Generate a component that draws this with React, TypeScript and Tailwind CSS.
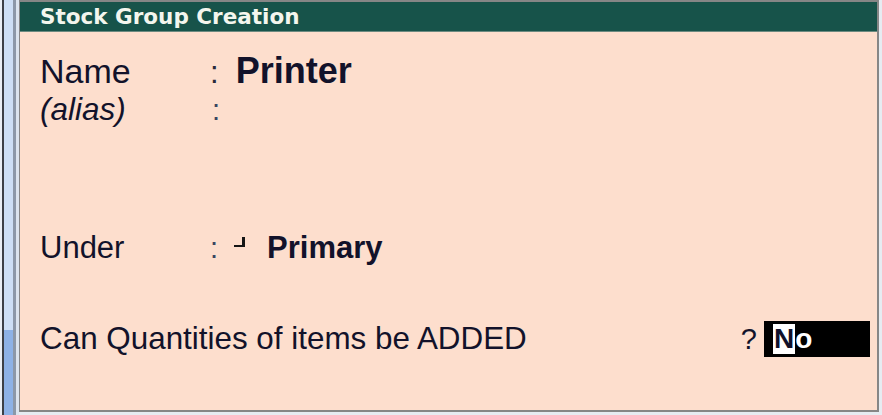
import React from 'react';

export default function App() {
    return (
        <div className="flex h-[415px] w-[882px] overflow-hidden bg-[#e6ecf2] font-['Liberation_Sans',Arial,sans-serif]">
            {/* window edge strip on the left */}
            <div className="flex h-full w-[19px] shrink-0">
                <div className="w-[2px] bg-[#e9eef4]" />
                <div className="w-[2px] bg-[#3c4046]" />
                <div className="flex w-[9px] flex-col">
                    <div className="h-[330px] bg-[#cddff5]" />
                    <div className="flex-1 bg-[#8db2e6]" />
                </div>
                <div className="w-[3px] bg-[#8c98a8]" />
                <div className="w-[3px] bg-[#dbe4ee]" />
            </div>

            <div className="mr-[3px] flex h-[412px] flex-1 flex-col border-t-2 border-r-2 border-b-2 border-l border-[#868686]">
                <div className="flex h-[30px] items-center border-b border-[#6c8a80] bg-[#17534a] pl-[20px]">
                    <h1 className="font-['DejaVu_Sans',Verdana,sans-serif] text-[21.5px] font-bold leading-none text-[#f4f6ee]">
                        Stock Group Creation
                    </h1>
                </div>

                <div className="flex flex-1 flex-col bg-[#fddecd] pt-[19px] pr-[7px] pl-[20px] text-[#12122a]">
                    <div className="flex h-[40px] items-baseline leading-[40px]">
                        <span className="w-[170px] text-[34px]">Name</span>
                        <span className="text-[31px] text-[#2a2a3a]">:</span>
                        <span className="ml-[17px] text-[36px] font-bold">Printer</span>
                    </div>

                    <div className="flex h-[36px] items-baseline leading-[36px]">
                        <span className="w-[172px] text-[31.5px] italic">(alias)</span>
                        <span className="text-[29px] text-[#3a4560]">:</span>
                    </div>

                    <div className="mt-[103px] flex h-[36px] items-baseline leading-[36px]">
                        <span className="w-[170px] text-[31px]">Under</span>
                        <span className="text-[29px] text-[#3a4560]">:</span>
                        <span className="ml-[16px] inline-block h-[10px] w-[11px] -translate-y-[11px] border-r-[3px] border-b-[2px] border-[#151515]" />
                        <span className="ml-[22px] text-[31px] font-bold">Primary</span>
                    </div>

                    <div className="mt-[55px] flex h-[36px] items-center leading-[36px]">
                        <span className="flex-1 text-[31.4px]">
                            Can Quantities of items be ADDED
                        </span>
                        <span className="text-[29px]">?</span>
                        <span className="ml-[7px] flex h-[36px] w-[106px] items-center bg-black pl-[9px] text-[28px] leading-[30px] font-bold">
                            <span className="bg-white px-[1px] text-[#10102a]">N</span>
                            <span className="text-white">o</span>
                        </span>
                    </div>
                </div>
            </div>
        </div>
    );
}
